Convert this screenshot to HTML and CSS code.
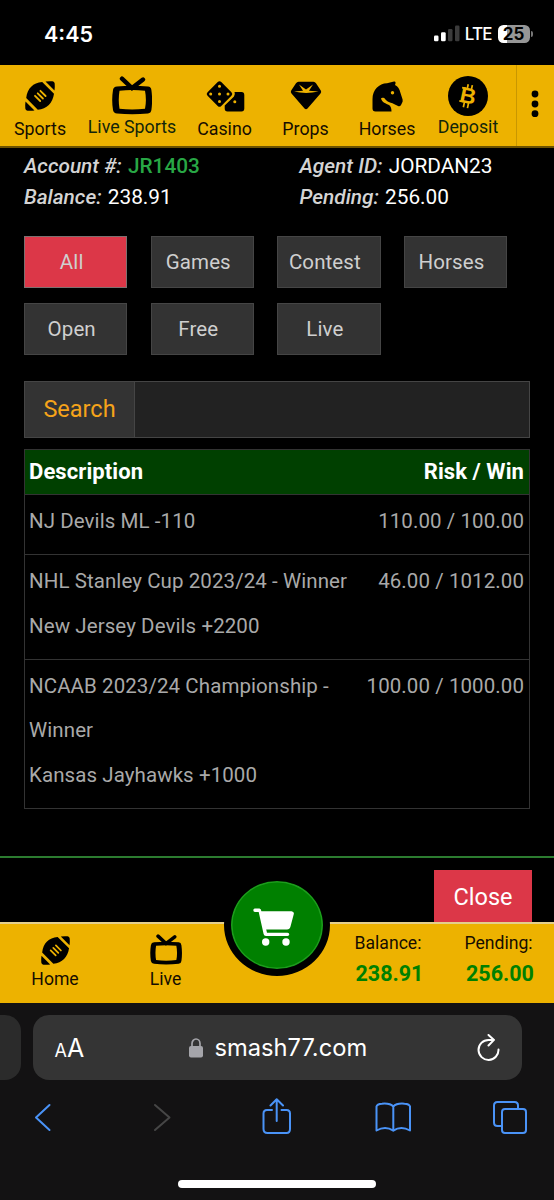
FILE: index.html
```
<!DOCTYPE html>
<html lang="en">
<head>
  <meta charset="UTF-8">
  <meta name="viewport" content="width=device-width, initial-scale=1.0">
  <title>Pending Bets</title>
  <link rel="stylesheet" href="styles.css">
</head>
<body>
  <svg class="sprite" width="0" height="0">
    <symbol id="football" viewBox="0 0 30 30">
      <path d="M20.500 0.500Q24 0 27.500 0.300Q29.500 .5 29.700 2.500Q30 6 29.500 9.500L20.500 0.500ZM17.200 1C8 2 2.500 7 1.200 17L12.800 28.800C22 28 27.700 22 29 12.800L17.200 1ZM0.500 20.500Q0 24 .3 27.500Q.5 29.500 2.500 29.700Q6 30 9.500 29.500L.5 20.500Z"/>
      <path class="cut laces" d="M10 14.800l5.200 5.200M12.700 12.300l5.200 5.200M15.400 9.800l5.200 5.200"/>
    </symbol>
    <symbol id="tv" viewBox="0 0 40 39">
      <path class="line" stroke-width="4.400" stroke-linecap="round" d="M10 2.700L20 12L31 3.500"/>
      <path fill-rule="evenodd" d="M5 10.500Q20 9.200 36 10.500Q39 10.800 39.400 14Q40.800 24 39.400 34Q39 37 36 37.500Q20 39 5 37.500Q1.700 37.200 1 34Q-.6 24 1 14Q1.500 10.800 5 10.500ZM7.500 14.800Q6 24 7.500 32.700Q20 34.300 33 32.700Q34.800 24 33 14.800Q20 13.400 7.500 14.800Z"/>
    </symbol>
  </svg>

  <div class="status-bar">
    <span class="time">4:45</span>
    <div class="status-right">
      <svg width="26" height="17" viewBox="0 0 26 17">
        <rect x="0" y="10.500" width="4.500" height="5.700" rx="1.200" fill="#fff"/>
        <rect x="7" y="7.300" width="4.700" height="8.900" rx="1.200" fill="#fff"/>
        <rect x="14" y="4" width="4.500" height="12.200" rx="1.200" fill="#3b3b3b"/>
        <rect x="21" y="0.500" width="4.500" height="15.700" rx="1.200" fill="#3b3b3b"/>
      </svg>
      <span class="lte">LTE</span>
      <div class="battery">25</div>
      <div class="battery-tip"></div>
    </div>
  </div>

  <nav class="top-nav">
    <a class="nav-item">
      <svg class="icon-md" width="30" height="30"><use href="#football"/></svg>
      <span>Sports</span>
    </a>
    <a class="nav-item active">
      <svg width="40" height="39"><use href="#tv"/></svg>
      <span>Live Sports</span>
    </a>
    <a class="nav-item">
      <svg class="icon-md dice" width="40" height="32" viewBox="0 0 40 32">
        <rect x="4.800" y="4.300" width="19.400" height="19.400" rx="2.500" transform="rotate(45 14.500 14)"/>
        <path d="M29.500 12H36.500Q39.300 12 39.300 15V28.500Q39.300 31.500 36.500 31.500H22.500Q19.700 31.500 19.700 28.500V25.500L29 16.500Q30.500 14.500 29.500 12Z"/>
        <g class="dots"><circle cx="5.700" cy="14" r="1.500"/><circle cx="14.500" cy="6.300" r="1.500"/><circle cx="14.500" cy="14" r="1.500"/><circle cx="23" cy="14" r="1.500"/><circle cx="14.500" cy="21.500" r="1.500"/><circle cx="29.800" cy="21.700" r="1.500"/></g>
      </svg>
      <span>Casino</span>
    </a>
    <a class="nav-item">
      <svg class="icon-md" width="32" height="30" viewBox="0 0 32 30">
        <path d="M8.500.8H23.500Q25 .8 26 2.300L30.800 9.500Q31.800 11 30.500 12.600L17.500 27.500Q16 29 14.500 27.500L1.500 12.600Q.2 11 1.200 9.500L6 2.300Q7 .8 8.500 .8Z"/>
        <path class="cut-fill" d="M4 10.600L13 9.800L9 3.500L16 8.600L23 3.500L19 9.800L28.500 10.600Q16 13.500 4 10.600Z"/>
      </svg>
      <span>Props</span>
    </a>
    <a class="nav-item">
      <svg class="icon-md" width="31" height="31" viewBox="0 0 31 31">
        <path d="M3.500 30.500Q.5 30.500 .5 27.500V18C.5 9 7 2.500 15 2.300L22 .5Q24 0 23.500 2.500L23 4C26 5.500 27.500 8 28.500 12L30.600 18.500Q31 20.500 30 22L29 24Q28 25.800 26 25L20.500 22.200C17 21.500 14 20 12.500 17.200C10.500 16.500 9.500 16.800 9 17.500C10 21.500 14 22.500 17 24Q19.500 25.500 19.500 30.500Z"/>
        <circle class="dots" cx="20.500" cy="11.700" r="1.700"/>
      </svg>
      <span>Horses</span>
    </a>
    <a class="nav-item active">
      <svg width="40" height="40" viewBox="0 0 40 40">
        <circle cx="20" cy="20" r="20"/>
        <g transform="rotate(12 20 20)">
          <text class="coin" x="20" y="27.300" text-anchor="middle">B</text>
          <path class="cut" d="M17.800 8.500v5.500M22 8.500v5.500M17.800 26.500v5.500M22 26.500v5.500M12.500 13h4M12.500 26.500h4"/>
        </g>
      </svg>
      <span>Deposit</span>
    </a>
    <a class="more">
      <svg width="8" height="28" viewBox="0 0 8 28">
        <circle cx="4" cy="4" r="3.400"/><circle cx="4" cy="14" r="3.400"/><circle cx="4" cy="23.700" r="3.400"/>
      </svg>
    </a>
  </nav>

  <main class="main">
    <div class="account">
      <div><em>Account #:</em> <span class="account-id">JR1403</span></div>
      <div><em>Agent ID:</em> JORDAN23</div>
      <div><em>Balance:</em> 238.91</div>
      <div><em>Pending:</em> 256.00</div>
    </div>

    <div class="filters">
      <button class="filter selected">All</button>
      <button class="filter">Games</button>
      <button class="filter">Contest</button>
      <button class="filter">Horses</button>
      <button class="filter">Open</button>
      <button class="filter">Free</button>
      <button class="filter">Live</button>
    </div>

    <div class="search">
      <label for="search-input" class="search-label">Search</label>
      <input type="text" id="search-input" class="search-input">
    </div>

    <div class="bets">
      <div class="bets-head"><span>Description</span><span>Risk / Win</span></div>
      <div class="bet">
        <div>NJ Devils ML -110</div>
        <div>110.00 / 100.00</div>
      </div>
      <div class="bet">
        <div>NHL Stanley Cup 2023/24 - Winner<br>New Jersey Devils +2200</div>
        <div>46.00 / 1012.00</div>
      </div>
      <div class="bet">
        <div>NCAAB 2023/24 Championship -<br>Winner<br>Kansas Jayhawks +1000</div>
        <div>100.00 / 1000.00</div>
      </div>
    </div>
  </main>

  <div class="modal-footer">
    <button class="btn-close">Close</button>
  </div>

  <footer class="bottom-bar">
    <a class="bottom-item">
      <svg width="29" height="29"><use href="#football"/></svg>
      <span>Home</span>
    </a>
    <a class="bottom-item">
      <svg class="tv-small" width="32" height="31"><use href="#tv"/></svg>
      <span>Live</span>
    </a>
    <div class="bottom-gap"></div>
    <div class="amount"><span>Balance:</span><b>238.91</b></div>
    <div class="amount"><span>Pending:</span><b>256.00</b></div>
    <a class="cart">
      <svg width="42" height="40" viewBox="0 0 42 40">
        <path d="M2 1.500H6.500Q8 1.500 8.400 4.200H38.500Q41.300 4.500 40.800 7L37.500 19.500Q36.800 22.500 34 22.500H13.200L14 25.700H34.500Q36.300 25.700 36.300 27.300T34.500 29H13Q11 29 10.600 27L5.700 5H2Q.3 5 .3 3.200T2 1.500Z"/>
        <circle cx="12.700" cy="35" r="3.700"/><circle cx="33" cy="35" r="3.700"/>
      </svg>
    </a>
  </footer>

  <div class="browser">
    <div class="tabs">
      <div class="tab-prev"></div>
      <div class="url-bar">
        <span class="text-size"><small>A</small>A</span>
        <div class="url">
          <svg width="14" height="20" viewBox="0 0 14 20">
            <rect x="0" y="8" width="14" height="11.500" rx="2" fill="#a5a5aa"/>
            <path d="M3 9V5.500a4 4.500 0 0 1 8 0V9" fill="none" stroke="#a5a5aa" stroke-width="1.700"/>
          </svg>
          <span>smash77.com</span>
        </div>
        <svg width="24" height="28" viewBox="0 0 24 28" fill="none" stroke="#fff" stroke-width="2" stroke-linecap="round" stroke-linejoin="round">
          <path d="M16.500 5.900H11.500A10 10 0 1 0 21.500 15.500M11.500 1L17 5.900L11.500 11.500"/>
        </svg>
      </div>
    </div>
    <div class="toolbar">
      <svg class="tool" viewBox="0 0 36 38"><path d="M25.500 7L12 19.500L25.500 32"/></svg>
      <svg class="tool disabled" viewBox="0 0 36 38"><path d="M14 7L28.500 19.500L14 32"/></svg>
      <svg class="tool" viewBox="0 0 36 38"><path d="M14 12H9Q5.500 12 5.500 15.500V31Q5.500 35 9.500 35H28.500Q32 35 32 31V15.500Q32 12 28.500 12H23.500M18.700 23V1.500M12.500 7.500L18.700 1.300L25 7.500"/></svg>
      <svg class="tool" viewBox="0 0 36 38"><path d="M1.500 8.500Q2 6 7 5.700Q15 5 18.300 8.500Q21.500 5 29.500 5.700Q34.500 6 35 8.500V32.500Q26 27.500 18.300 32.700Q10.500 27.500 1.500 32.500ZM18.300 8.500V32.700"/></svg>
      <svg class="tool" viewBox="0 0 36 38"><path d="M9.500 28H5.500Q2 28 2 24.500V7.500Q2 4 5.500 4H22.500Q26 4 26 7.500V11"/><rect x="10" y="11" width="24" height="24" rx="3"/></svg>
    </div>
    <div class="home-indicator"></div>
  </div>
</body>
</html>
```
FILE: styles.css
```
:root {
  --gold: #edb200;
  --red: #dc3748;
  --green: #008000;
  --panel: #333333;
  --border: #454545;
  --blue: #4a93f7;
}

* {
  margin: 0;
  padding: 0;
  box-sizing: border-box;
}

body {
  width: 554px;
  height: 1200px;
  overflow: hidden;
  background-color: #000;
  color: #fff;
  font-family: Roboto, Arial, sans-serif;
  font-size: 20.5px;
}

.sprite {
  display: block;
}

button {
  font-family: inherit;
}

/* phone status bar */
.status-bar {
  height: 65px;
  padding: 2px 21px 0 44px;
  display: flex;
  justify-content: space-between;
  align-items: center;
  font-family: Inter, sans-serif;
}

.time {
  font-size: 21.5px;
  font-weight: 600;
}

.status-right {
  display: flex;
  align-items: center;
}

.lte {
  margin: 0 6px 0 5px;
  font-size: 17px;
  font-weight: 500;
  letter-spacing: -0.9px;
}

.battery {
  width: 32px;
  height: 18px;
  border-radius: 5.5px;
  background: linear-gradient(to right, #fff 27%, #969696 27%);
  color: #000;
  font-size: 17px;
  font-weight: 700;
  line-height: 18px;
  text-align: center;
}

.battery-tip {
  width: 2px;
  height: 6px;
  margin-left: 1.5px;
  border-radius: 0 2px 2px 0;
  background-color: #777;
}

/* top navigation */
.top-nav {
  height: 83px;
  display: grid;
  grid-template-columns: 80px 104px 81px 81px 82px 88px 38px;
  background-color: var(--gold);
  border-bottom: 2px solid #6b5100;
  color: #150d00;
  font-size: 17.8px;
}

.nav-item {
  display: flex;
  flex-direction: column;
  align-items: center;
  justify-content: space-between;
  padding: 11px 0 7px;
}

.nav-item:nth-child(6) {
  padding-right: 8px;
}

.nav-item.active {
  color: #12250a;
  padding-bottom: 9px;
}

.nav-item span {
  line-height: 21px;
}

.icon-md {
  margin-top: 5px;
}

.icon-md.dice {
  margin-top: 4px;
}

.top-nav svg,
.bottom-item svg {
  fill: #000;
}

.line {
  fill: none;
  stroke: #000;
}

.cut {
  fill: none;
  stroke: var(--gold);
  stroke-width: 1.7;
}

.laces {
  stroke-width: 1.8;
  stroke-linecap: round;
}

.cut-fill,
.dots,
.coin {
  fill: var(--gold);
}

.coin {
  font-size: 22px;
  font-weight: 700;
  font-family: "Liberation Sans", sans-serif;
}

.more {
  display: flex;
  align-items: center;
  justify-content: center;
  padding: 0 2px 4px 0;
  border-left: 1px solid #c99700;
}

/* account summary */
.main {
  height: 708px;
  padding: 3px 24px 0;
}

.account {
  display: grid;
  grid-template-columns: 275.5px 1fr;
  line-height: 31px;
  font-size: 20.8px;
}

.account em {
  margin-right: 1px;
  color: #d4d4d4;
  font-weight: 500;
}

.account-id {
  color: #28a745;
  font-weight: 500;
}

.filters {
  display: grid;
  grid-template-columns: repeat(4, 103.4px);
  column-gap: 23.2px;
  row-gap: 15px;
  margin-top: 23px;
}

.filter {
  height: 52px;
  padding-right: 8px;
  background-color: var(--panel);
  border: 1px solid var(--border);
  color: #cfcfcf;
  font-size: 20.5px;
  letter-spacing: 0.1px;
}

.filter.selected {
  background-color: var(--red);
  border-color: #7d7070;
}

.search {
  display: flex;
  height: 57px;
  margin-top: 26px;
  border: 1px solid var(--border);
}

.search-label {
  width: 110px;
  background-color: var(--panel);
  border-right: 1px solid var(--border);
  color: #f5a31a;
  font-size: 23.5px;
  line-height: 54px;
  text-align: center;
}

.search-input {
  flex: 1;
  border: none;
  background-color: #222;
  color: #fff;
}

.bets {
  margin-top: 11px;
  border: 1px solid #333;
  color: #a9a9a9;
  letter-spacing: 0.08px;
}

.bets-head {
  display: flex;
  justify-content: space-between;
  height: 44px;
  padding: 0 5px 0 4px;
  background-color: #004000;
  color: #fff;
  font-size: 22px;
  font-weight: 700;
  line-height: 43px;
}

.bet {
  display: flex;
  justify-content: space-between;
  padding: 4px 5px 10.5px 4px;
  border-top: 1px solid #333;
  line-height: 44.6px;
}

.modal-footer {
  display: flex;
  justify-content: flex-end;
  height: 66px;
  padding: 12px 22px 0 0;
  border-top: 2px solid #2c7c30;
}

.btn-close {
  width: 98px;
  padding-top: 2px;
  border: none;
  background-color: var(--red);
  color: #fff;
  font-size: 23.5px;
}

/* bottom bar */
.bottom-bar {
  position: relative;
  display: grid;
  grid-template-columns: 110px 111px 112px 110px 111px;
  height: 81px;
  border-top: 2px solid #e4cf8c;
  background-color: var(--gold);
  color: #150d00;
  font-size: 17.6px;
}

.bottom-item {
  display: flex;
  flex-direction: column;
  align-items: center;
  justify-content: space-between;
  padding: 12px 0 13px;
}

.tv-small {
  margin-top: -2px;
}

.bottom-item span {
  line-height: 21px;
}

.amount {
  display: flex;
  flex-direction: column;
  align-items: center;
  padding-top: 8px;
  line-height: 22px;
}

.amount b {
  margin: 9px 0 0 3px;
  color: var(--green);
  font-size: 21.5px;
}

.cart {
  position: absolute;
  left: 224px;
  top: -50px;
  width: 106px;
  height: 102px;
  display: flex;
  align-items: center;
  justify-content: center;
  padding: 3px 7px 0 0;
  border: 7px solid #000;
  border-radius: 50%;
  background-color: var(--green);
  box-shadow: inset 0 0 0 1.5px #1d9c1d;
}

.cart svg {
  fill: #fff;
}

/* browser chrome */
.browser {
  height: 197px;
  padding-top: 12px;
  background-color: #131213;
  font-family: Inter, sans-serif;
}

.tabs {
  display: flex;
  gap: 12px;
}

.tab-prev {
  width: 20.5px;
  background-color: #2b2b2b;
  border-radius: 0 16px 16px 0;
}

.url-bar {
  display: flex;
  align-items: center;
  justify-content: space-between;
  width: 489px;
  height: 65px;
  padding: 0 20px 0 22px;
  border-radius: 16px;
  background-color: #343434;
}

.text-size {
  font-size: 25px;
}

.text-size small {
  font-size: 18px;
}

.url {
  display: flex;
  align-items: center;
  gap: 11px;
  margin-right: 5px;
  font-size: 23.7px;
}

.toolbar {
  display: flex;
  justify-content: space-between;
  padding: 18px 26px 0 24px;
}

.tool {
  width: 36px;
  height: 38px;
  fill: none;
  stroke: var(--blue);
  stroke-width: 2;
  stroke-linecap: round;
  stroke-linejoin: round;
}

.tool.disabled {
  stroke: #464646;
}

.home-indicator {
  width: 198px;
  height: 8px;
  margin: 44px auto 0;
  border-radius: 4px;
  background-color: #fff;
}
```
